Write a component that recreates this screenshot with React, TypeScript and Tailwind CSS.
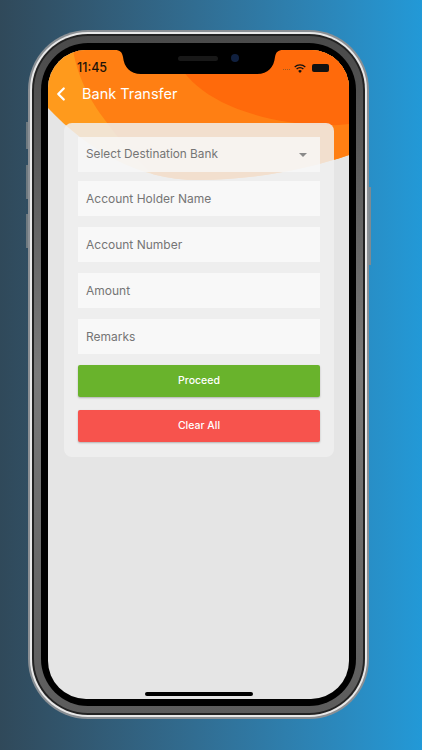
import React from 'react';
import { ChevronLeft } from 'lucide-react';

const fields = ['Account Holder Name', 'Account Number', 'Amount', 'Remarks'];

const HeaderArt = () => (
    <svg
        className="absolute top-0 left-0"
        width="301"
        height="140"
        viewBox="0 0 301 140"
    >
        <defs>
            <clipPath id="wave">
                <path d="M0 0H301V105C260 119 205 130 150 130C90 130 40 100 0 58Z" />
            </clipPath>
        </defs>
        <g clipPath="url(#wave)">
            <rect width="301" height="140" fill="#ff9a1c" />
            <path
                d="M25 0C30 30 45 55 60 74C75 95 92 112 115 135L301 135V0Z"
                fill="#ff7f13"
            />
            <path
                d="M125 0C132 28 165 60 240 72C265 76 285 76 301 74V0Z"
                fill="#ff6a0b"
            />
        </g>
    </svg>
);

const Notch = () => (
    <div className="absolute top-0 left-[67px] w-[168px] h-[24px] flex items-center gap-[13px] pb-[8px] pl-[63px]">
        <svg
            className="absolute top-0 left-0"
            width="168"
            height="24"
            viewBox="0 0 168 24"
        >
            <path
                d="M0 0C5 0 7 2 8 7C9 17 15 24 26 24H142C153 24 159 17 160 7C161 2 163 0 168 0Z"
                fill="#000"
            />
        </svg>
        <div className="relative w-[40px] h-[5px] rounded-full bg-[#181818]" />
        <div className="relative w-[8px] h-[8px] rounded-full bg-[#10203f]" />
    </div>
);

const WifiIcon = () => (
    <svg width="12" height="9" viewBox="0 0 12 9">
        <path d="M6 9 4.2 6.9a2.7 2.7 0 0 1 3.6 0Z" fill="#111" />
        <path
            d="M2.6 5.1a5 5 0 0 1 6.8 0M.7 2.9a7.8 7.8 0 0 1 10.6 0"
            stroke="#111"
            strokeWidth="1.3"
            fill="none"
        />
    </svg>
);

const App = () => {
    return (
        <div
            className="w-[422px] h-[750px] overflow-hidden bg-gradient-to-r from-[#30495a] to-[#2299d7] pl-[28px] pt-[30px]"
            style={{ fontFamily: 'Inter, sans-serif' }}
        >
            <div className="relative w-[341px] h-[689px] rounded-[60px] bg-[#8a8f94] p-[2px]">
                <div className="absolute left-[-2px] top-[92px] w-[2px] h-[27px] bg-[#6f7a80]" />
                <div className="absolute left-[-2px] top-[135px] w-[2px] h-[34px] bg-[#6f7a80]" />
                <div className="absolute left-[-2px] top-[184px] w-[2px] h-[34px] bg-[#6f7a80]" />
                <div className="absolute right-[-2px] top-[157px] w-[2px] h-[78px] bg-[#7d8a92]" />
                <div className="w-full h-full rounded-[58px] bg-[#e8e8e8] p-[2px]">
                    <div className="w-full h-full rounded-[56px] bg-[#222222] p-[2px]">
                        <div className="w-full h-full rounded-[54px] bg-gradient-to-b from-[#4a4a4a] via-[#7a7a7a] to-[#5c5c5c] p-[7px]">
                            <div className="w-full h-full rounded-[47px] bg-black p-[7px]">
                                <div className="relative w-full h-full rounded-[38px] overflow-hidden bg-[#e5e5e5] flex flex-col">
                                    <HeaderArt />
                                    <Notch />
                                    <div className="relative h-[35px] flex items-center justify-between pl-[29px] pr-[20px] pt-[1px]">
                                        <span className="text-[12.5px] font-medium leading-none text-[#1c1208]">
                                            11:45
                                        </span>
                                        <div className="flex items-center gap-[6px]">
                                            <div className="flex gap-[1px] mr-[-2px] mt-[2px]">
                                                <div className="w-[1px] h-[1px] bg-[#9a5a20]" />
                                                <div className="w-[1px] h-[1px] bg-[#9a5a20]" />
                                                <div className="w-[1px] h-[1px] bg-[#9a5a20]" />
                                                <div className="w-[1px] h-[1px] bg-[#9a5a20]" />
                                            </div>
                                            <WifiIcon />
                                            <div className="w-[17px] h-[8px] rounded-[2px] bg-[#111]" />
                                        </div>
                                    </div>
                                    <div className="relative h-[20px] mt-[-1px] flex items-center pl-[2px] gap-[10px] text-white">
                                        <ChevronLeft
                                            size={22}
                                            strokeWidth={2.5}
                                        />
                                        <span className="text-[14.5px] leading-none">
                                            Bank Transfer
                                        </span>
                                    </div>
                                    <div className="relative mt-[19px] ml-[16px] mr-[15px] h-[334px] rounded-[8px] bg-[#f0f0f0]/85 p-[14px] flex flex-col">
                                        <div className="h-[35px] bg-[#f8f8f8]/80 flex items-center justify-between pl-[8px] pr-[13px]">
                                            <span className="text-[11.8px] text-[#757575]">
                                                Select Destination Bank
                                            </span>
                                            <div className="w-0 h-0 border-x-[4px] border-x-transparent border-t-[4px] border-t-[#8a8a8a]" />
                                        </div>
                                        <div className="flex flex-col gap-[11px] mt-[9px]">
                                            {fields.map((field) => (
                                                <div
                                                    key={field}
                                                    className="h-[35px] bg-[#f8f8f8] flex items-center pl-[8px] text-[12px] text-[#757575]"
                                                >
                                                    {field}
                                                </div>
                                            ))}
                                        </div>
                                        <button className="mt-[11px] h-[32px] rounded-[2px] bg-[#69b32c] shadow-[0_1px_2px_rgba(0,0,0,0.25)] text-white text-[10.5px] font-medium">
                                            Proceed
                                        </button>
                                        <button className="mt-[13px] h-[32px] rounded-[2px] bg-[#f7534d] shadow-[0_1px_2px_rgba(0,0,0,0.25)] text-white text-[10.5px] font-medium">
                                            Clear All
                                        </button>
                                    </div>
                                    <div className="absolute bottom-[3px] left-[97px] w-[108px] h-[4px] rounded-full bg-black" />
                                </div>
                            </div>
                        </div>
                    </div>
                </div>
            </div>
        </div>
    );
};

export default App;
